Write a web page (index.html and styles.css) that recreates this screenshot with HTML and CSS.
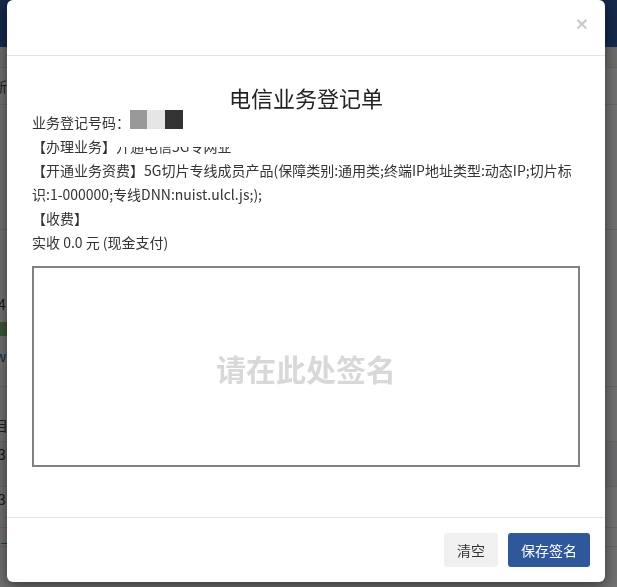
FILE: index.html
```html
<!DOCTYPE html>
<html lang="zh-CN">
<head>
<meta charset="utf-8">
<title>电信业务登记单</title>
<link rel="stylesheet" href="styles.css">
</head>
<body>
<div class="page">
  <div class="topbar"></div>
  <div class="row r-tab"></div>
  <div class="row r-1"><span class="cut">新</span></div>
  <div class="row r-2"></div>
  <div class="row r-3"><span class="num">4</span><span class="tag"></span><span class="link">w</span></div>
  <div class="row r-4"><span class="cut2">目</span></div>
  <div class="row r-5"><span class="num">3</span></div>
  <div class="row r-6"><span class="num">3</span></div>
  <div class="row r-7"><span class="teal">≡</span></div>
</div>

<div class="overlay"></div>

<div class="modal">
  <div class="modal-header">
    <button class="close" type="button">×</button>
  </div>
  <div class="modal-body">
    <h2 class="title">电信业务登记单</h2>
    <div class="line">业务登记号码：<span class="code"><i class="c1"></i><i class="c2"></i><i class="c3"></i></span></div>
    <div class="line">【办理业务】<span class="clipped">开通电信5G专网业</span></div>
    <div class="line">【开通业务资费】5G切片专线成员产品(保障类别:通用类;终端IP地址类型:动态IP;切片标识:1-000000;专线DNN:nuist.ulcl.js;);</div>
    <div class="line">【收费】</div>
    <div class="line">实收 0.0 元 (现金支付)</div>
    <div class="sign-box"><span class="sign-hint">请在此处签名</span></div>
  </div>
  <div class="modal-footer">
    <button class="btn btn-clear" type="button">清空</button>
    <button class="btn btn-save" type="button">保存签名</button>
  </div>
</div>
</body>
</html>
```
FILE: styles.css
```css
html, body {
  margin: 0;
  padding: 0;
}
body {
  font-family: "Noto Sans CJK SC", "Noto Sans", sans-serif;
  background: #ffffff;
  height: 587px;
  overflow: hidden;
}

/* underlying page */
.page {
  width: 617px;
  height: 587px;
  overflow: hidden;
}
.topbar {
  height: 47px;
  background: #2f5ba8;
}
.row {
  border-bottom: 1px solid #e4e4e4;
  font-size: 14px;
  color: #333;
  background: #ffffff;
  overflow: hidden;
}
.r-tab { height: 20px; background: #f4f4f4; }
.r-1 { height: 36px; line-height: 36px; }
.r-2 { height: 124px; }
.r-3 { height: 156px; }
.r-4 { height: 54px; line-height: 76px; }
.r-5 { height: 44px; line-height: 44px; background: #f0f2f5; }
.r-6 { height: 40px; line-height: 50px; }
.r-7 { height: 18px; line-height: 36px; }
.cut { margin-left: -7px; color: #444; }
.cut2 { margin-left: -6px; color: #444; }
.num { display: block; height: 24px; line-height: 24px; margin-left: -2px; }
.r-3 .num { margin-top: 62px; }
.tag {
  display: block;
  width: 8px;
  height: 14px;
  margin-top: 6px;
  background: #7fc47f;
}
.link {
  display: block;
  margin-top: 8px;
  margin-left: -5px;
  color: #2a6fb5;
  line-height: 24px;
}
.teal { color: #28a0a8; margin-left: -1px; }

.overlay {
  position: fixed;
  inset: 0;
  background: rgba(0, 0, 0, 0.56);
}

/* modal */
.modal {
  position: fixed;
  left: 7px;
  top: 0;
  width: 598px;
  background: #ffffff;
  border-radius: 6px;
  box-shadow: 0 4px 14px rgba(0, 0, 0, 0.5);
  overflow: hidden;
}
.modal-header {
  border-bottom: 1px solid #e5e5e5;
  box-sizing: border-box;
  height: 56px;
  display: flex;
  justify-content: flex-end;
  padding: 10px 17px 0 0;
}
.close {
  border: 0;
  background: transparent;
  padding: 0;
  font-family: "Liberation Sans", Arial, sans-serif;
  font-size: 21px;
  font-weight: bold;
  line-height: 28px;
  height: 28px;
  color: #000;
  opacity: 0.2;
  cursor: pointer;
}
.modal-body {
  padding: 28px 25px 50px;
  color: #333;
  font-size: 14px;
  line-height: 24px;
}
.title {
  margin: 0;
  font-size: 22px;
  font-weight: normal;
  line-height: 26px;
  text-align: center;
  color: #222;
}
.line {
  font-size: 14px;
  line-height: 24px;
}
.code {
  display: inline-block;
  vertical-align: top;
  height: 19px;
  font-size: 0;
}
.code i {
  display: inline-block;
  width: 17px;
  height: 19px;
}
.code .c1 { background: #999999; }
.code .c2 { background: #e6e6e6; width: 18px; }
.code .c3 { background: #333333; width: 18px; }
.clipped {
  display: inline-block;
  vertical-align: top;
  line-height: 24px;
  clip-path: inset(13px 0 0 0);
}
.sign-box {
  margin-top: 12px;
  height: 201px;
  border: 2px solid #808080;
  box-sizing: border-box;
  display: flex;
  align-items: center;
  justify-content: center;
}
.sign-hint {
  font-size: 30px;
  font-weight: bold;
  color: #d8d8d8;
  line-height: 30px;
  margin-top: 2px;
}
.modal-footer {
  border-top: 1px solid #e5e5e5;
  padding: 15px;
  display: flex;
  justify-content: flex-end;
  gap: 10px;
}
.btn {
  height: 34px;
  padding: 0 13px;
  border: 0;
  border-radius: 3px;
  font-family: "Noto Sans CJK SC", "Noto Sans", sans-serif;
  font-size: 14px;
  line-height: 34px;
  cursor: pointer;
}
.btn-clear {
  background: #f0f0f0;
  color: #333;
}
.btn-save {
  background: #2e5899;
  color: #ffffff;
}
```
